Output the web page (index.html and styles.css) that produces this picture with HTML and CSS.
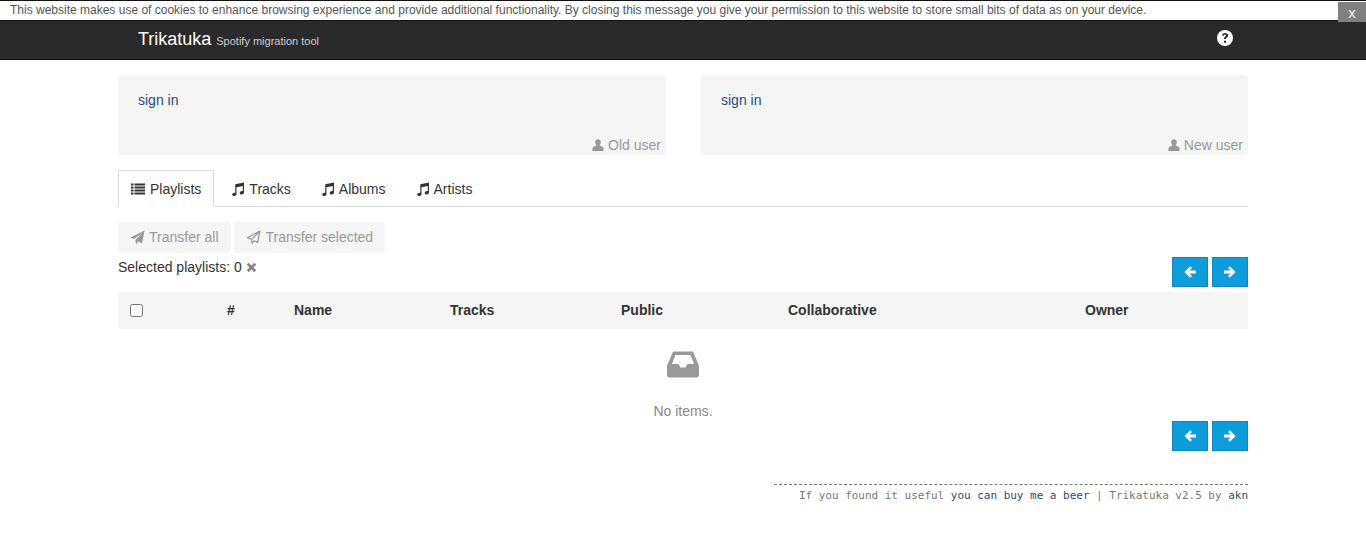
FILE: index.html
```html
<!DOCTYPE html>
<html lang="en">
<head>
<meta charset="utf-8">
<title>Trikatuka</title>
<link rel="stylesheet" href="styles.css">
</head>
<body>
<svg class="sprites" aria-hidden="true">
  <symbol id="i-user" viewBox="0 0 12 12"><path d="M6 .3c1.700 0 2.800 1.100 2.800 2.800 0 1.200-.5 2.300-1.300 3 .1.500.4.700 1 .9l1.800.7c.9.4 1.200 1 1.200 1.900V12H.5V9.600c0-.9.300-1.500 1.200-1.900l1.800-.7c.6-.2.900-.4 1-.9-.8-.7-1.300-1.800-1.300-3C3.200 1.400 4.300.3 6 .3z"/></symbol>
  <symbol id="i-list" viewBox="0 0 14 12"><path d="M0 1h2.500v2H0zM3.500 1H14v2H3.500zM0 4h2.500v2H0zM3.500 4H14v2H3.500zM0 7h2.500v2H0zM3.500 7H14v2H3.500zM0 10h2.500v2H0zM3.500 10H14v2H3.500z" transform="translate(0 -.5)"/></symbol>
  <symbol id="i-music" viewBox="0 0 14 14"><path d="M13 .6v9.900c0 1.200-1.200 2-2.400 2-1.100 0-1.900-.6-1.900-1.500 0-1.100 1.100-1.900 2.300-1.900.3 0 .6 0 .8.100V4L5.500 5.200v7c0 1.100-1.200 1.800-2.400 1.800-1.100 0-1.900-.6-1.900-1.500 0-1.100 1.100-1.800 2.300-1.800.3 0 .6 0 .8.100V2.300z"/></symbol>
  <symbol id="i-plane" viewBox="0 0 16 16"><path d="M15.500.5 12.800 14 8.700 12.200 6.500 15.500 5.800 10.600 13 3 4.500 9.700.5 8z"/></symbol>
  <symbol id="i-plane-o" viewBox="0 0 16 16"><path fill="none" stroke="currentColor" stroke-width="1.300" stroke-linejoin="round" d="M14.800 1.200 12.400 13.200 8.600 11.500 6.600 14.300 5.900 10.200 1.500 8.200zM14.800 1.200 5.900 10.200M6.600 14.300 8.600 11.500"/></symbol>
  <symbol id="i-x" viewBox="0 0 12 12"><path d="M3 .8 6 3.800 9 .8 11.200 3 8.200 6l3 3L9 11.200l-3-3-3 3L.8 9l3-3-3-3z"/></symbol>
  <symbol id="i-left" viewBox="0 0 14 14"><path d="M7.200 1.200 9 3 6.400 5.600H13v2.800H6.400L9 11 7.200 12.800 1.400 7z"/></symbol>
  <symbol id="i-right" viewBox="0 0 14 14"><path d="M6.800 1.200 5 3l2.600 2.600H1v2.800h6.600L5 11l1.800 1.800L12.600 7z"/></symbol>
</svg>

<div class="cookie">
  <p class="cookie-text">This website makes use of cookies to enhance browsing experience and provide additional functionality. By closing this message you give your permission to this website to store small bits of data as on your device.</p>
  <span class="cookie-close">x</span>
</div>

<header class="navbar">
  <div class="navbar-inner">
    <div class="brand"><span class="brand-name">Trikatuka</span> <small class="brand-sub">Spotify migration tool</small></div>
    <svg class="help" viewBox="0 0 16 16" aria-hidden="true"><circle cx="8" cy="8" r="8" fill="#fff"/><path fill="#2a2a2a" d="M8.200 2.900c-1.800 0-3 .9-3.200 2.600l2 .3c.1-.8.500-1.200 1.100-1.200.6 0 1 .3 1 .8 0 .4-.2.700-.8 1.100-.9.600-1.300 1.200-1.300 2.200v.4h2v-.3c0-.5.200-.8.800-1.200.9-.6 1.400-1.200 1.400-2.200 0-1.500-1.200-2.500-3-2.500zM7 10.700h2.100v2H7z"/></svg>
  </div>
</header>

<main class="container">
  <section class="users">
    <div class="panel">
      <a class="link panel-link" href="#">sign in</a>
      <div class="panel-label"><svg class="icon icon-user"><use href="#i-user"/></svg>Old user</div>
    </div>
    <div class="panel">
      <a class="link panel-link" href="#">sign in</a>
      <div class="panel-label"><svg class="icon icon-user"><use href="#i-user"/></svg>New user</div>
    </div>
  </section>

  <nav class="tabs">
    <a class="tab tab-active" href="#"><svg class="icon icon-list"><use href="#i-list"/></svg>Playlists</a>
    <a class="tab" href="#"><svg class="icon icon-music"><use href="#i-music"/></svg>Tracks</a>
    <a class="tab" href="#"><svg class="icon icon-music"><use href="#i-music"/></svg>Albums</a>
    <a class="tab" href="#"><svg class="icon icon-music"><use href="#i-music"/></svg>Artists</a>
  </nav>

  <div class="actions">
    <button class="action" type="button"><svg class="icon icon-plane"><use href="#i-plane"/></svg>Transfer all</button>
    <button class="action" type="button"><svg class="icon icon-plane icon-plane-wide"><use href="#i-plane-o"/></svg>Transfer selected</button>
  </div>

  <div class="selection-row">
    <div class="selected">Selected playlists: 0 <svg class="icon icon-x"><use href="#i-x"/></svg></div>
    <div class="pager">
      <button class="page-btn" type="button"><svg class="icon icon-arrow"><use href="#i-left"/></svg></button>
      <button class="page-btn" type="button"><svg class="icon icon-arrow"><use href="#i-right"/></svg></button>
    </div>
  </div>

  <div class="thead">
    <input class="check" type="checkbox">
    <span>#</span>
    <span>Name</span>
    <span>Tracks</span>
    <span>Public</span>
    <span>Collaborative</span>
    <span>Owner</span>
  </div>

  <div class="empty">
    <svg class="inbox" viewBox="0 0 32 27" aria-hidden="true"><path fill="#999" fill-rule="evenodd" d="M7.500.5h17c1 0 1.700.5 2.100 1.400l4.900 11.500c.3.700.5 1.300.5 2V24c0 1.400-1.100 2.500-2.500 2.500h-27C1.100 26.500 0 25.400 0 24v-8.600c0-.7.200-1.300.5-2L5.400 1.900C5.800 1 6.500.5 7.500.5zM8.400 4 5 13h6.500l2 3.500h5l2-3.500H27L23.600 4z"/></svg>
    <p class="empty-text">No items.</p>
  </div>

  <div class="pager pager-bottom">
    <button class="page-btn" type="button"><svg class="icon icon-arrow"><use href="#i-left"/></svg></button>
    <button class="page-btn" type="button"><svg class="icon icon-arrow"><use href="#i-right"/></svg></button>
  </div>

  <footer class="footer">
    <div class="footer-text">If you found it useful <a class="link" href="#">you can buy me a beer</a> | Trikatuka v2.5 by <a class="link" href="#">akn</a></div>
  </footer>
</main>
</body>
</html>
```

FILE: styles.css
```css
* { box-sizing: border-box; }

html, body { margin: 0; padding: 0; }

body {
  background: #fff;
  color: #333;
  font-family: "Liberation Sans", Arial, sans-serif;
  font-size: 14px;
  line-height: 20px;
}

.sprites { display: none; }

.icon { display: inline-block; fill: currentColor; flex: none; }

.link { color: #1f4e79; text-decoration: none; }

/* cookie bar */
.cookie {
  display: flex;
  justify-content: space-between;
  height: 21px;
  border-top: 1px solid #111;
  border-bottom: 1px solid #111;
  background: #fff;
}

.cookie-text {
  margin: 0;
  padding-left: 10px;
  color: #555;
  font-size: 12px;
  line-height: 18px;
  white-space: nowrap;
}

.cookie-close {
  width: 28px;
  height: 20px;
  margin-top: 1px;
  background: #808080;
  color: #f2f2f2;
  font-size: 15px;
  line-height: 22px;
  text-align: center;
}

/* navbar */
.navbar {
  height: 39px;
  background: #2a2a2a;
  border-bottom: 1px solid #0c0c0c;
}

.navbar-inner {
  display: flex;
  justify-content: space-between;
  align-items: center;
  width: 1130px;
  height: 38px;
  margin-left: 118px;
  padding: 0 15px 2px 20px;
}

.brand { color: #fff; white-space: nowrap; }

.brand-name { font-size: 18px; line-height: 36px; }

.brand-sub { margin-left: 1px; color: #ccc; font-size: 11px; }

.help { width: 16px; height: 16px; margin-bottom: 2px; }

/* layout */
.container { width: 1130px; margin: 0 0 0 118px; }

.users {
  display: grid;
  grid-template-columns: 548px 547px;
  column-gap: 35px;
  padding-top: 15px;
}

.panel {
  display: flex;
  flex-direction: column;
  justify-content: space-between;
  height: 80px;
  padding: 15px 5px 0 20px;
  background: #f5f5f5;
  border-radius: 3px;
}

.panel-link { align-self: flex-start; }

.panel-label {
  display: flex;
  align-items: center;
  align-self: flex-end;
  height: 20px;
  color: #999;
}

.icon-user { width: 12px; height: 12px; margin-right: 4px; }

/* tabs */
.tabs {
  display: flex;
  height: 37px;
  margin-top: 15px;
  border-bottom: 1px solid #ddd;
}

.tab {
  display: flex;
  align-items: center;
  height: 37px;
  padding: 0 12px;
  border: 1px solid transparent;
  color: #333;
  text-decoration: none;
}

.tab-active {
  border-color: #ddd;
  border-bottom-color: #fff;
  background: #fff;
}

.tab + .tab { margin-left: 4px; }

.icon-list { width: 14px; height: 12px; margin-right: 5px; }
.icon-music { width: 14px; height: 14px; margin-right: 4px; }

/* actions */
.actions { display: flex; gap: 3px; margin-top: 15px; }

.action {
  display: flex;
  align-items: center;
  height: 31px;
  padding: 0 12px 1px;
  border: 0;
  border-radius: 3px;
  background: #f5f5f5;
  color: #999;
  font: inherit;
}

.icon-plane { width: 15px; height: 15px; margin-right: 4px; }
.icon-plane-wide { margin-right: 5px; }

/* selection row */
.selection-row {
  display: flex;
  justify-content: space-between;
  height: 34px;
  margin-top: 4px;
}

.selected { display: flex; align-items: center; height: 20px; }

.icon-x { width: 11px; height: 11px; margin-left: 4px; color: #888; }

.pager { display: flex; justify-content: flex-end; gap: 4px; }

.page-btn {
  display: flex;
  align-items: center;
  justify-content: center;
  width: 36px;
  height: 30px;
  padding: 0;
  border: 1px solid #0b87bb;
  background: #0d9ddb;
  color: #fff;
}

.icon-arrow { width: 14px; height: 14px; }

/* table header */
.thead {
  display: grid;
  grid-template-columns: 97px 67px 156px 171px 167px 297px 1fr;
  align-items: center;
  height: 37px;
  margin-top: 1px;
  padding: 0 0 2px 12px;
  border-radius: 3px;
  background: #f5f5f5;
  font-weight: bold;
}

.check { width: 13px; height: 13px; margin: 2px 0 0; }

/* empty */
.empty { display: flex; flex-direction: column; align-items: center; padding: 22px 0 0; }

.inbox { width: 32px; height: 27px; }

.empty-text { margin: 23px 0 0; color: #888; }

/* footer */
.footer { display: flex; justify-content: flex-end; margin-top: 33px; }

.footer-text {
  width: 474px;
  padding-top: 2px;
  border-top: 1px dashed #777;
  color: #777;
  font-family: "DejaVu Sans Mono", "Liberation Mono", monospace;
  font-size: 10.970px;
  line-height: 18px;
  text-align: right;
  white-space: nowrap;
}
```
